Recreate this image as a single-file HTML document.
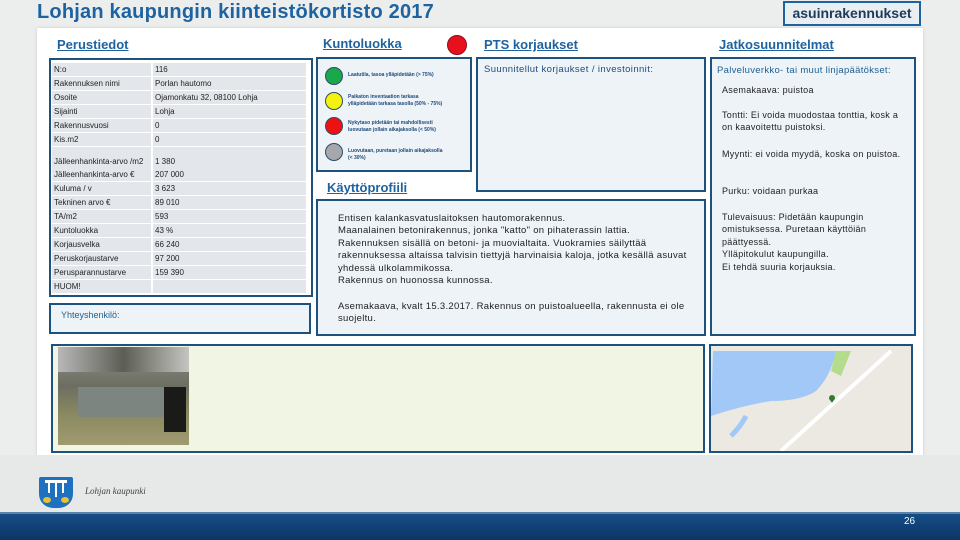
<!DOCTYPE html>
<html><head><meta charset="utf-8"><style>
*{margin:0;padding:0;box-sizing:border-box}
body{width:960px;height:540px;position:relative;overflow:hidden;background:#eceeee;font-family:"Liberation Sans",sans-serif;color:#222}
.a{position:absolute}
.box{position:absolute;border:2px solid #1d527f;background:#eef3f8}
.h{position:absolute;color:#1e63a0;font-weight:bold;text-decoration:underline;font-size:13px}
.row{position:absolute;left:52px;width:255px;height:13px;font-size:8px;line-height:13px}
.row span{position:absolute;top:0;height:13px;background:#e3e7ec;padding-left:2px}
.row span:first-child{left:0;width:99px}
.row span:last-child{left:101px;width:153px}
.dot{position:absolute;width:18px;height:18px;border-radius:50%;border:1px solid #2c4d6a}
.lg{position:absolute;left:348px;font-size:5px;color:#1e4b7a;font-weight:bold;line-height:7px}
.t{position:absolute;font-size:9.5px;line-height:12.4px;color:#222;letter-spacing:.3px}
</style></head><body>
<div class="a" style="left:37px;top:28px;width:886px;height:430px;background:#fff;box-shadow:0 0 3px #ccc"></div>
<div class="a" style="left:37px;top:1px;font-size:20px;font-weight:bold;color:#1e63a0;letter-spacing:.2px">Lohjan kaupungin kiinteistökortisto 2017</div>
<div class="a" style="left:783px;top:1px;width:138px;height:25px;border:2px solid #1e63a0;background:#e9eef3;color:#1d3a5a;font-weight:bold;font-size:14px;line-height:21px;text-align:center">asuinrakennukset</div>

<div class="h" style="left:57px;top:37px">Perustiedot</div>
<div class="box" style="left:49px;top:58px;width:264px;height:239px;background:#fff"></div>
<div class="row" style="top:63px"><span>N:o</span><span>116</span></div>
<div class="row" style="top:77px"><span>Rakennuksen nimi</span><span>Porlan hautomo</span></div>
<div class="row" style="top:91px"><span>Osoite</span><span>Ojamonkatu 32, 08100 Lohja</span></div>
<div class="row" style="top:105px"><span>Sijainti</span><span>Lohja</span></div>
<div class="row" style="top:119px"><span>Rakennusvuosi</span><span>0</span></div>
<div class="row" style="top:133px"><span>Kis.m2</span><span>0</span></div>
<div class="row" style="top:147px;height:21px"><span style="height:21px;line-height:29px">Jälleenhankinta-arvo /m2</span><span style="height:21px;line-height:29px">1 380</span></div>
<div class="row" style="top:168px"><span>Jälleenhankinta-arvo €</span><span>207 000</span></div>
<div class="row" style="top:182px"><span>Kuluma / v</span><span>3 623</span></div>
<div class="row" style="top:196px"><span>Tekninen arvo €</span><span>89 010</span></div>
<div class="row" style="top:210px"><span>TA/m2</span><span>593</span></div>
<div class="row" style="top:224px"><span>Kuntoluokka</span><span>43 %</span></div>
<div class="row" style="top:238px"><span>Korjausvelka</span><span>66 240</span></div>
<div class="row" style="top:252px"><span>Peruskorjaustarve</span><span>97 200</span></div>
<div class="row" style="top:266px"><span>Perusparannustarve</span><span>159 390</span></div>
<div class="row" style="top:280px"><span>HUOM!</span><span></span></div>
<div class="box" style="left:49px;top:303px;width:262px;height:31px"></div>
<div class="a" style="left:61px;top:310px;font-size:9px;color:#1e5f8f">Yhteyshenkilö:</div>

<div class="h" style="left:323px;top:36px">Kuntoluokka</div>
<div class="a" style="left:447px;top:35px;width:20px;height:20px;border-radius:50%;background:#e8101a;border:1px solid #8a1020"></div>
<div class="box" style="left:316px;top:57px;width:156px;height:115px"></div>
<div class="dot" style="left:325px;top:67px;background:#1aa84a"></div>
<div class="lg" style="top:72px">Laatutila, tasoa ylläpidetään (&gt; 75%)</div>
<div class="dot" style="left:325px;top:92px;background:#f4f20e"></div>
<div class="lg" style="top:94px">Paikaton inventaation tarkasa<br>ylläpidetään tarkasa tasolla (50% - 75%)</div>
<div class="dot" style="left:325px;top:117px;background:#ee1111"></div>
<div class="lg" style="top:120px">Nykytaso pidetään tai mahdollisesti<br>luovutaan jollain aikajaksolla (&lt; 50%)</div>
<div class="dot" style="left:325px;top:143px;background:#a5a7ab"></div>
<div class="lg" style="top:148px">Luovutaan, puretaan jollain aikajaksolla<br>(&lt; 30%)</div>

<div class="h" style="left:484px;top:37px">PTS korjaukset</div>
<div class="box" style="left:476px;top:57px;width:230px;height:135px"></div>
<div class="a" style="left:484px;top:64px;font-size:9.5px;color:#1e4b7a;letter-spacing:.4px">Suunnitellut korjaukset / investoinnit:</div>

<div class="h" style="left:327px;top:180px">Käyttöprofiili</div>
<div class="box" style="left:316px;top:199px;width:390px;height:137px"></div>
<div class="t" style="left:338px;top:213px;width:360px">Entisen kalankasvatuslaitoksen hautomorakennus.<br>Maanalainen betonirakennus, jonka "katto" on pihaterassin lattia.<br>Rakennuksen sisällä on betoni- ja muovialtaita. Vuokramies säilyttää rakennuksessa altaissa talvisin tiettyjä harvinaisia kaloja, jotka kesällä asuvat yhdessä ulkolammikossa.<br>Rakennus on huonossa kunnossa.</div>
<div class="t" style="left:338px;top:301px;width:360px">Asemakaava, kvalt 15.3.2017. Rakennus on puistoalueella, rakennusta ei ole suojeltu.</div>

<div class="h" style="left:719px;top:37px">Jatkosuunnitelmat</div>
<div class="box" style="left:710px;top:57px;width:206px;height:279px"></div>
<div class="a" style="left:717px;top:65px;font-size:9.5px;color:#1e5f8f;letter-spacing:.3px">Palveluverkko- tai muut linjapäätökset:</div>
<div class="t" style="left:722px;top:84px;font-size:9px;width:185px">Asemakaava: puistoa</div>
<div class="t" style="left:722px;top:109px;font-size:9px;width:185px">Tontti: Ei voida muodostaa tonttia, kosk a on kaavoitettu puistoksi.</div>
<div class="t" style="left:722px;top:148px;font-size:9px;width:185px">Myynti: ei voida myydä, koska on puistoa.</div>
<div class="t" style="left:722px;top:185px;font-size:9px;width:185px">Purku: voidaan purkaa</div>
<div class="t" style="left:722px;top:211px;font-size:9px;width:185px">Tulevaisuus: Pidetään kaupungin omistuksessa. Puretaan käyttöiän päättyessä.<br>Ylläpitokulut kaupungilla.<br>Ei tehdä suuria korjauksia.</div>

<div class="box" style="left:51px;top:344px;width:654px;height:109px;background:#f1f5e4"></div>
<div class="a" style="left:58px;top:347px;width:131px;height:98px;background:linear-gradient(180deg,#8e8e86 0%,#6d6e62 40%,#8b8a60 70%,#a19a70 100%)">
 <div class="a" style="left:0;top:0;width:131px;height:25px;background:linear-gradient(90deg,#b8b8b8,#5c5e55,#c5c5c0)"></div>
 <div class="a" style="left:20px;top:40px;width:90px;height:30px;background:#7c8580"></div>
 <div class="a" style="left:106px;top:40px;width:22px;height:45px;background:#1a1a18"></div>
</div>
<div class="box" style="left:709px;top:344px;width:204px;height:109px;background:#ece8e2;overflow:hidden">
 <svg width="200" height="105" style="position:absolute;left:0;top:0">
  <path d="M2 5 H125 Q120 30 105 45 Q90 55 60 55 Q30 60 0 70 Z" fill="#a2c8f7"/>
  <path d="M125 5 H140 L130 30 L120 25 Z" fill="#b4dc8c"/>
  <path d="M70 105 L180 5" stroke="#fff" stroke-width="4"/>
  <path d="M20 90 Q30 80 35 70" stroke="#a2c8f7" stroke-width="5"/>
  <path d="M118 52 l3 5 l3 -5 z" fill="#2f7a2f"/><circle cx="121" cy="52" r="3" fill="#2f7a2f"/>
 </svg>
</div>

<div class="a" style="left:0;top:455px;width:960px;height:58px;background:#e7e9e9"></div>
<div class="a" style="left:0;top:512px;width:960px;height:28px;background:linear-gradient(180deg,#154d86,#0d3564);border-top:2px solid #5a82a8"></div>
<div class="a" style="left:39px;top:477px;width:34px;height:31px;background:#1e70c0;border-radius:2px 2px 14px 14px"></div>
<div class="a" style="left:45px;top:480px;width:22px;height:3px;background:#fff"></div>
<div class="a" style="left:48px;top:483px;width:2px;height:10px;background:#fff"></div>
<div class="a" style="left:55px;top:483px;width:2px;height:14px;background:#fff"></div>
<div class="a" style="left:62px;top:483px;width:2px;height:10px;background:#fff"></div>
<div class="a" style="left:43px;top:497px;width:8px;height:6px;border-radius:50%;background:#e8c030"></div>
<div class="a" style="left:61px;top:497px;width:8px;height:6px;border-radius:50%;background:#e8c030"></div>
<div class="a" style="left:85px;top:486px;font-family:'Liberation Serif',serif;font-style:italic;font-size:9px;color:#444">Lohjan kaupunki</div>
<div class="a" style="left:904px;top:516px;font-size:10px;color:#fff">26</div>
</body></html>
